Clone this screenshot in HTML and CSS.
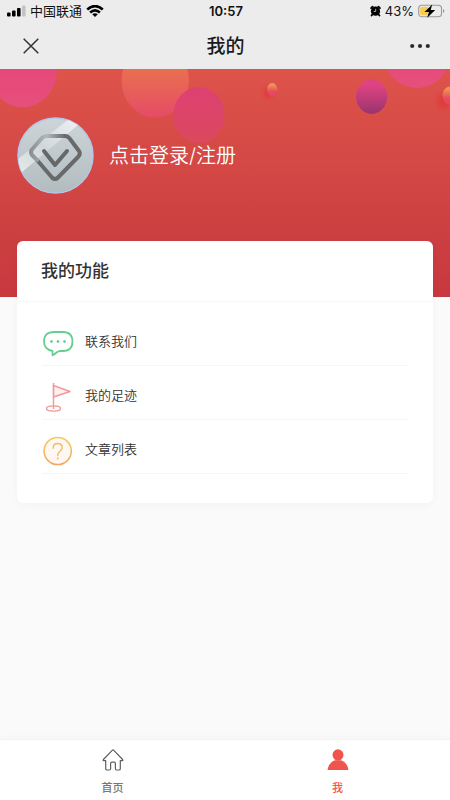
FILE: index.html
```html
<!DOCTYPE html>
<html lang="zh-CN">
<head>
<meta charset="utf-8">
<meta name="viewport" content="width=device-width, initial-scale=1">
<title>我的</title>
<link rel="stylesheet" href="styles.css">
</head>
<body>
<div class="status">
  <div class="status-left">
    <svg width="19" height="12" viewBox="0 0 19 12" aria-hidden="true"><rect x="0" y="7.5" width="3.6" height="4" rx="1"/><rect x="5" y="5.5" width="3.6" height="6" rx="1"/><rect x="10" y="3" width="3.6" height="8.500" rx="1"/><rect x="15" y="0.500" width="3.600" height="11" rx="1" fill="#c3c3c3"/></svg>
    <span>中国联通</span>
    <svg width="18" height="12" viewBox="0 0 18 12" aria-hidden="true"><g fill="none" stroke="#000" stroke-width="2.600"><path d="M1.200 4.500Q9-2.300 16.800 4.500"/><path d="M4.100 7.500Q9 3.200 13.900 7.500"/></g><path d="M6.200 9.200Q9 7.100 11.800 9.200L9 12z"/></svg>
  </div>
  <time class="clock">10:57</time>
  <div class="status-right">
    <svg width="11" height="12" viewBox="0 0 12 12" aria-hidden="true"><circle cx="6" cy="6.200" r="5"/><path d="M1.200 2.800L2.800 1.300M10.800 2.800L9.200 1.300M2.700 9.700l-1 1.200M9.300 9.700l1 1.200" stroke="#000" stroke-width="2" stroke-linecap="round"/><path d="M6.200 3.600v2.900H4" fill="none" stroke="#ececec" stroke-width=".8"/></svg>
    <span>43%</span>
    <svg width="27" height="14" viewBox="0 0 27 14" aria-hidden="true"><rect x=".7" y="1.200" width="22.800" height="11.600" rx="3.200" fill="none" stroke="#999" stroke-width="1.100"/><path d="M4 2.700h6v8.600H4a1.800 1.800 0 0 1-1.800-1.800v-5A1.800 1.800 0 0 1 4 2.700z" fill="#f9cd48"/><path d="M25 5q1.300.5 1.300 2T25 9z" fill="#999"/><path d="M14.200.5L6.500 7.900h4.400l-1.700 5.900 8-7.900h-4.500z"/></svg>
  </div>
</div>
<header class="nav">
  <button class="nav-btn" type="button" aria-label="关闭"><svg width="16" height="16" viewBox="0 0 16 16"><path d="M.7.700l14.600 14.600M15.300.700L.7 15.300" stroke="#333" stroke-width="1.500"/></svg></button>
  <h1>我的</h1>
  <button class="nav-btn" type="button" aria-label="更多"><svg width="20" height="6" viewBox="0 0 20 6" fill="#2c2c2c"><circle cx="2.200" cy="3" r="2.100"/><circle cx="10" cy="3" r="2.100"/><circle cx="17.800" cy="3" r="2.100"/></svg></button>
</header>
<main>
  <section class="hero">
    <svg class="bubbles" viewBox="0 0 450 227" preserveAspectRatio="xMidYMin slice" aria-hidden="true">
      <defs>
        <linearGradient id="pink" x2="0" y2="1"><stop stop-color="#e3437a"/><stop offset="1" stop-color="#e74f7b"/></linearGradient>
        <linearGradient id="orange" x2="0" y2="1"><stop offset=".25" stop-color="#e9754c"/><stop offset="1" stop-color="#e54b66"/></linearGradient>
        <linearGradient id="rose" x2="0" y2="1"><stop stop-color="#dd3f75"/><stop offset="1" stop-color="#db4960"/></linearGradient>
        <linearGradient id="plum" x2="0" y2="1"><stop offset=".15" stop-color="#df4482"/><stop offset="1" stop-color="#98346f"/></linearGradient>
        <linearGradient id="drop" x2="0" y2="1"><stop offset=".1" stop-color="#ed9a50"/><stop offset=".65" stop-color="#e94b5d"/><stop offset="1" stop-color="#e44465"/></linearGradient>
        <filter id="soft" x="-100%" y="-100%" width="300%" height="300%"><feGaussianBlur stdDeviation="2"/></filter>
      </defs>
      <ellipse cx="23.500" cy="2" rx="34" ry="36" fill="url(#pink)"/>
      <ellipse cx="155.500" cy="11.500" rx="33.500" ry="37" fill="url(#orange)"/>
      <ellipse cx="199" cy="46" rx="25.500" ry="28" fill="url(#rose)" opacity=".92"/>
      <ellipse cx="268" cy="24" rx="5" ry="6" fill="#df3838" opacity=".7" filter="url(#soft)"/>
      <ellipse cx="272" cy="20.500" rx="5.200" ry="6.500" fill="url(#drop)"/>
      <ellipse cx="371" cy="27.500" rx="15.500" ry="17.200" fill="url(#plum)"/>
      <ellipse cx="416" cy="-17" rx="34" ry="36" fill="url(#pink)"/>
      <ellipse cx="443" cy="32" rx="7" ry="8" fill="#df3838" opacity=".7" filter="url(#soft)"/>
      <ellipse cx="449" cy="26.500" rx="7.500" ry="9" fill="url(#drop)"/>
    </svg>
    <a class="profile" href="#login">
      <svg width="78" height="78" viewBox="0 0 78 78" aria-hidden="true">
        <defs>
          <linearGradient id="silver" x2="0" y2="1"><stop stop-color="#cdd5d9"/><stop offset="1" stop-color="#b2bcbf"/></linearGradient>
          <linearGradient id="shine" x1="0" y1="1" x2="1" y2="0"><stop stop-color="#e5e9ea"/><stop offset=".45" stop-color="#d0d7da"/><stop offset="1" stop-color="#eef1f3"/></linearGradient>
          <linearGradient id="fade" x1="0" y1="0" x2="1" y2="0"><stop stop-color="#8b9092"/><stop offset=".5" stop-color="#b2b8ba"/><stop offset="1" stop-color="#747778"/></linearGradient>
          <clipPath id="disc"><circle cx="39.500" cy="39.500" r="37.500"/></clipPath>
          <filter id="blur"><feGaussianBlur stdDeviation=".6"/></filter>
        </defs>
        <circle cx="39.500" cy="39.500" r="37.500" fill="url(#silver)" stroke="#b3c6e7" stroke-width="1.500"/>
        <g clip-path="url(#disc)"><path d="M2 43L53 3l9 6L5 57z" fill="url(#shine)" filter="url(#blur)"/></g>
        <g fill="none" stroke-linejoin="round" stroke-linecap="round" filter="url(#blur)">
          <path d="M21 44L36 61.500Q39 64.500 42 61.500L62 41Q65 38 63 35L54 23Q52 20 49 20H45" stroke="#686a6b" stroke-width="4"/>
          <path d="M28 35l11 14L51 35" stroke="#656768" stroke-width="4"/>
          <path d="M21 44L16 39Q14 36 16 33.500L26 22Q28 20 31 20H46" stroke="url(#fade)" stroke-width="4"/>
        </g>
      </svg>
      <span>点击登录/注册</span>
    </a>
  </section>
  <section class="card">
    <h2>我的功能</h2>
    <ul>
      <li><a href="#contact"><svg width="32" height="32" viewBox="0 0 32 32" aria-hidden="true"><path d="M12 5h9q9.500 0 9.500 9.500T21 24h-2.500q-2 0-4 1.500-2.500 2.200-4 2.700V24Q2 22.500 2 14.500 2 5 12 5z" fill="#fff" stroke="#67ce8d" stroke-width="1.800" stroke-linejoin="round"/><g fill="#59c47e"><circle cx="9.500" cy="14.500" r="1.300"/><circle cx="16" cy="14.500" r="1.300"/><circle cx="22.500" cy="14.500" r="1.300"/></g></svg><span>联系我们</span></a></li>
      <li><a href="#footprint"><svg width="32" height="32" viewBox="0 0 32 32" aria-hidden="true"><g fill="none" stroke="#f19a97" stroke-width="1.400"><path d="M11.500 4.500L28 10.500 11.500 16z" fill="#fdf0f0" stroke-linejoin="round"/><path d="M11.500 2v26"/><ellipse cx="11.500" cy="27.500" rx="7" ry="2.600"/></g></svg><span>我的足迹</span></a></li>
      <li><a href="#articles"><svg width="32" height="32" viewBox="0 0 32 32" aria-hidden="true"><defs><linearGradient id="gold" x2="0" y2="1"><stop stop-color="#f5ca58"/><stop offset="1" stop-color="#f2a765"/></linearGradient></defs><circle cx="15.700" cy="16" r="13.600" fill="#fff8f2" stroke="url(#gold)" stroke-width="1.500"/><path d="M11.200 13.200q0-4.700 4.500-4.700t4.500 4.300c0 3.400-4.500 3.200-4.500 7.700" fill="none" stroke="#efbd69" stroke-width="1.400" stroke-linecap="round"/><circle cx="15.700" cy="23.500" r="1" fill="#f0b779"/></svg><span>文章列表</span></a></li>
    </ul>
  </section>
</main>
<nav class="tabs">
  <a href="#home"><svg width="24" height="24" viewBox="0 0 24 24" aria-hidden="true"><path d="M11.200 2.300q.8-.7 1.600 0l8.800 9.200q.8 1-.3 1.200h-2v8q0 1.300-1.300 1.300h-2.600q-1 0-1-1.200v-5.300q0-1.300-1.300-1.300h-2.200q-1.300 0-1.300 1.300v5.300q0 1.200-1 1.200H6q-1.300 0-1.300-1.300v-8h-2q-1.100-.2-.3-1.200z" fill="#fff" stroke="#606060" stroke-width="1.200" stroke-linejoin="round"/></svg><span>首页</span></a>
  <a class="active" href="#me"><svg width="24" height="24" viewBox="0 0 24 24" fill="#f0554d" aria-hidden="true"><ellipse cx="12" cy="7" rx="5.500" ry="5.700"/><path d="M9 12.300h6c4.700 1.700 7 5.500 7.400 9.700H1.600C2 17.800 4.300 14 9 12.300z"/></svg><span>我</span></a>
</nav>
</body>
</html>
```
FILE: styles.css
```css
* { box-sizing: border-box; }

body {
  display: flex;
  flex-direction: column;
  min-height: 100vh;
  margin: 0;
  background: #fafafa;
  color: #333;
  font-family: Inter, "Noto Sans CJK SC", sans-serif;
}

h1, h2, ul { margin: 0; padding: 0; }
li { list-style: none; }
a { color: inherit; text-decoration: none; }
svg { display: block; flex: none; }

.status {
  display: grid;
  grid-template-columns: 1fr auto 1fr;
  align-items: center;
  height: 22px;
  padding: 0 5px 0 7px;
  background: #ececec;
  color: #111;
  font-size: 13px;
  line-height: 20px;
}

.status-left, .status-right {
  display: flex;
  align-items: center;
  gap: 4px;
}

.status-right { justify-content: flex-end; }
.clock { font-weight: 600; }

.nav {
  display: flex;
  align-items: center;
  justify-content: space-between;
  height: 47px;
  padding: 0 15px 0 16px;
  background: #ececec;
}

.nav h1 {
  padding-top: 2px;
  color: #1a1a1a;
  font-size: 19px;
  font-weight: 500;
  line-height: 28px;
}

.nav-btn {
  display: grid;
  place-items: center;
  width: 30px;
  height: 30px;
  padding: 0;
  border: 0;
  background: none;
}

main { flex: 1; }

.hero {
  position: relative;
  height: 228px;
  padding: 47px 16px 0;
  background: linear-gradient(#de534a, #c6383e);
}

.bubbles {
  position: absolute;
  inset: 0;
  width: 100%;
  height: 100%;
}

.profile {
  position: relative;
  display: flex;
  align-items: center;
  gap: 15px;
  color: #fff;
  font-size: 20px;
  font-weight: 350;
  line-height: 30px;
}

.profile span { padding-top: 2px; }

.card {
  position: relative;
  margin: -56px 17px 0;
  padding-bottom: 29px;
  border-radius: 6px;
  background: #fff;
  box-shadow: 0 2px 10px rgba(0, 0, 0, 0.03);
}

.card h2 {
  padding: 17px 24px;
  border-bottom: 1px solid #f8f8f8;
  font-size: 17px;
  font-weight: 500;
  line-height: 26px;
}

.card ul { padding: 10px 25px 0; }
.card li { border-bottom: 1px solid #f6f6f6; }

.card li a {
  display: flex;
  align-items: center;
  gap: 11px;
  height: 53px;
  padding-top: 9px;
  font-size: 13px;
  font-weight: 350;
  line-height: 20px;
}

.card li span { padding-bottom: 4px; }

.tabs {
  display: flex;
  height: 61px;
  border-top: 1px solid #f3f3f3;
  background: #fff;
  box-shadow: 0 -2px 6px rgba(0, 0, 0, 0.02);
}

.tabs a {
  display: flex;
  flex: 1;
  flex-direction: column;
  align-items: center;
  gap: 8px;
  padding-top: 8px;
  color: #777;
  font-size: 11px;
  font-weight: 500;
  line-height: 16px;
}

.tabs .active { color: #f0554d; }
```
